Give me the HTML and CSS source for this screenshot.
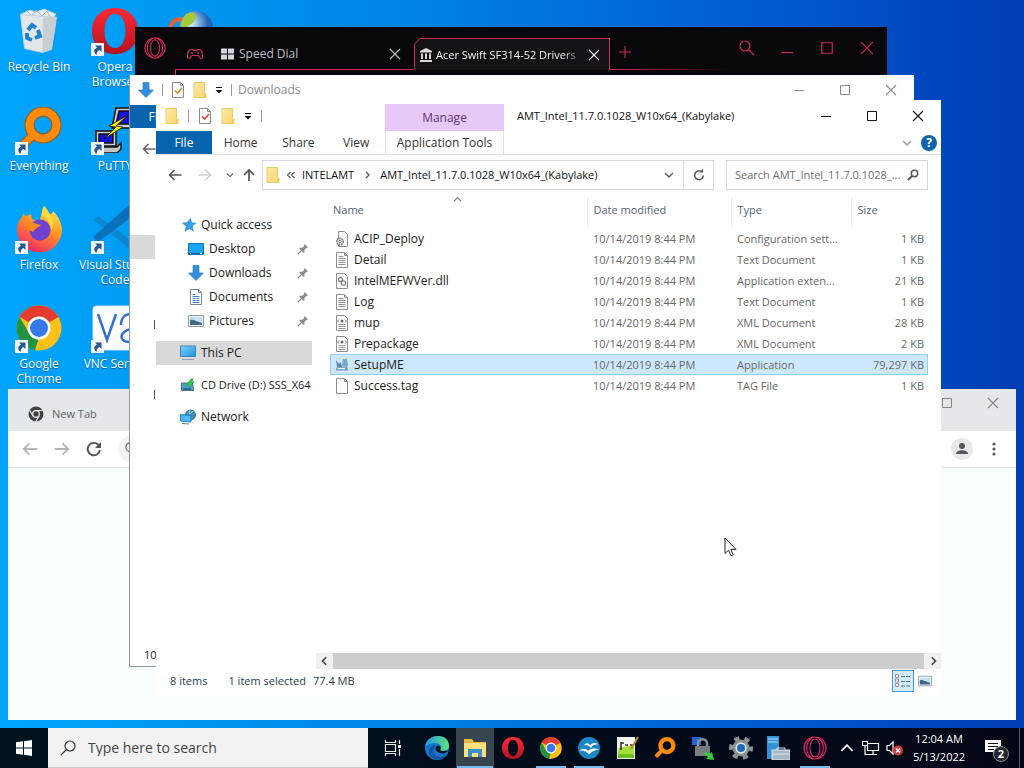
FILE: index.html
```html
<!DOCTYPE html>
<html lang="en">
<head>
<meta charset="utf-8">
<title>Desktop</title>
<link rel="stylesheet" href="styles.css">
</head>
<body>
<svg class="sprite" aria-hidden="true">
  <defs>
    <linearGradient id="g-folder" x1="0" y1="0" x2="1" y2="1"><stop offset="0" stop-color="#ffe9a0"/><stop offset="1" stop-color="#f8d775"/></linearGradient>
    <linearGradient id="g-opera" x1="0" y1="0" x2="0" y2="1"><stop offset="0" stop-color="#ff2a38"/><stop offset="1" stop-color="#b5101f"/></linearGradient>
    <linearGradient id="g-fox" x1="0.8" y1="0" x2="0.3" y2="1"><stop offset="0" stop-color="#fff04f"/><stop offset=".45" stop-color="#ff9423"/><stop offset="1" stop-color="#f4246c"/></linearGradient>
    <linearGradient id="g-edge" x1="0" y1="0" x2="1" y2="0"><stop offset="0" stop-color="#1f9be8"/><stop offset="1" stop-color="#5fe07a"/></linearGradient>
    <linearGradient id="g-screen" x1="0" y1="0" x2="1" y2="1"><stop offset="0" stop-color="#7cd3fb"/><stop offset="1" stop-color="#1c93e0"/></linearGradient>
    <radialGradient id="g-globe" cx=".35" cy=".35"><stop offset="0" stop-color="#e4f4ff"/><stop offset="1" stop-color="#1f65b8"/></radialGradient>
  </defs>
  <symbol id="i-min" viewBox="0 0 12 12"><path d="M1 6.500h10" stroke="currentColor" fill="none"/></symbol>
  <symbol id="i-max" viewBox="0 0 12 12"><path d="M1.500 1.500h9v9h-9z" stroke="currentColor" fill="none"/></symbol>
  <symbol id="i-close" viewBox="0 0 12 12"><path d="M1 1l10 10M11 1L1 11" stroke="currentColor" fill="none" stroke-width="1.100"/></symbol>
  <symbol id="i-plus" viewBox="0 0 12 12"><path d="M6 0v12M0 6h12" stroke="currentColor" fill="none" stroke-width="1.100"/></symbol>
  <symbol id="i-down" viewBox="0 0 10 10"><path d="M1 3l4 4 4-4" stroke="currentColor" fill="none" stroke-width="1.300"/></symbol>
  <symbol id="i-left" viewBox="0 0 14 14"><path d="M13.500 7H1.500M6.500 2L1.500 7l5 5" stroke="currentColor" fill="none" stroke-width="1.600"/></symbol>
  <symbol id="i-right" viewBox="0 0 14 14"><path d="M.5 7h12M7.500 2l5 5-5 5" stroke="currentColor" fill="none" stroke-width="1.600"/></symbol>
  <symbol id="i-up" viewBox="0 0 14 14"><path d="M7 13V2M2 7l5-5 5 5" stroke="currentColor" fill="none" stroke-width="1.700"/></symbol>
  <symbol id="i-crumb" viewBox="0 0 8 8"><path d="M3 1l3 3-3 3" stroke="currentColor" fill="none" stroke-width="1.300"/></symbol>
  <symbol id="i-dcrumb" viewBox="0 0 10 8"><path d="M4.500 1l-3 3 3 3M8.500 1l-3 3 3 3" stroke="currentColor" fill="none" stroke-width="1.100"/></symbol>
  <symbol id="i-reload" viewBox="0 0 16 16"><path d="M13 8.500A5 5 0 1 1 11 4.300" stroke="currentColor" fill="none" stroke-width="1.700"/><path d="M8.500 5h4V.8z" fill="currentColor"/></symbol>
  <symbol id="i-creload" viewBox="0 0 16 16"><path d="M14 9A6.200 6.200 0 1 1 12.500 4" stroke="currentColor" fill="none" stroke-width="1.900"/><path d="M9 7h6V1z" fill="currentColor"/></symbol>
  <symbol id="i-search" viewBox="0 0 16 16"><circle cx="10" cy="6" r="5" fill="none" stroke="currentColor" stroke-width="1.200"/><path d="M6.500 9.500L.8 15.200" stroke="currentColor" stroke-width="1.200"/></symbol>
  <symbol id="i-find" viewBox="0 0 12 12"><circle cx="7.500" cy="4.500" r="3.200" fill="none" stroke="currentColor" stroke-width="1.500"/><path d="M5 7L1 11" stroke="currentColor" stroke-width="2"/></symbol>
  <symbol id="i-folder" viewBox="0 0 14 16"><path d="M1 .5h10.500v10l1.500 1v4H1z" fill="url(#g-folder)" stroke="#eec968"/><path d="M11 12l2-1v4h-2z" fill="#f0c95d"/></symbol>
  <symbol id="i-check" viewBox="0 0 14 16"><path d="M1.500.5h8l3 3v12h-11z" fill="#fafafa" stroke="#8b8b8b"/><path d="M9.500.5v3h3" fill="none" stroke="#8b8b8b"/><path d="M4 8.500l2.500 2.500L11 6" stroke="currentColor" fill="none" stroke-width="1.600"/></symbol>
  <symbol id="i-menu" viewBox="0 0 8 8"><path d="M1 1.500h6" stroke="#111"/><path d="M.5 4h7L4 7.500z" fill="#111"/></symbol>
  <symbol id="i-dl" viewBox="0 0 16 16"><path d="M5 .5h6V8h4.500L8 15.500.5 8H5z" fill="#338fdb" stroke="#2274bb" stroke-width=".6"/></symbol>
  <symbol id="i-star" viewBox="0 0 14 14"><path d="M8.500.5l1 4.300 4.300.4L10.200 8l1.200 5L7.600 10.400 3 13.200 4.400 8.400.5 5l4.700-.3z" fill="#369fe8" stroke="#1f7fc6" stroke-width=".6"/></symbol>
  <symbol id="i-desk" viewBox="0 0 16 14"><path d="M.5 1.500h15v11H.5z" fill="#1aa5fb" stroke="#1273bd"/><path d="M1 11.500h14" stroke="#0c62a8"/><path d="M2 11.500h1M12 11.500h2" stroke="#cfeaff"/></symbol>
  <symbol id="i-doc" viewBox="0 0 14 16"><path d="M1.500.5h8l3 3v12h-11z" fill="#fff" stroke="#7d8790"/><path d="M9.500.5v3h3" fill="none" stroke="#7d8790"/><path d="M3.500 5.500h3M3.500 7.500h7M3.500 9.500h3m1 0h3M3.500 11.500h3m1 0h3M3.500 13.500h7" stroke="#2d86c4"/></symbol>
  <symbol id="i-pic" viewBox="0 0 16 12"><path d="M.5.5h15v11H.5z" fill="#fff" stroke="#8b99a6"/><path d="M2 2h12v8H2z" fill="#c4e0f5"/><path d="M2 5c3-1 5 1 12 3v2H2z" fill="#44698b"/></symbol>
  <symbol id="i-pc" viewBox="0 0 16 15"><path d="M.5.5h15v10.500H.5z" fill="url(#g-screen)" stroke="#3e87b5"/><path d="M2 14h12" stroke="#8ba4b5"/></symbol>
  <symbol id="i-cd" viewBox="0 0 16 14"><path d="M1.500 5h11l1 7.500h-12z" fill="#4f9fc4" stroke="#49707f"/><path d="M3 10h8v2H3z" fill="#266a8f"/><path d="M7 6L11 .8l2 .2-1 2.500 2 .5-5 5-1-2z" fill="#30c850" stroke="#198c35" stroke-width=".5"/></symbol>
  <symbol id="i-net" viewBox="0 0 16 16"><circle cx="10.500" cy="6" r="5" fill="#3f91ba" stroke="#2f6c91"/><path d="M10 1c-1 1.500-1 3-.5 4M13 2l-3 3" stroke="#9cd6e8" fill="none"/><path d="M.5 5.500l10.500 1v6.500l-10.500-1z" fill="#4db8f5" stroke="#287fb7"/><path d="M2 14.500l7 .5" stroke="#587f98"/></symbol>
  <symbol id="i-pin" viewBox="0 0 12 12"><path d="M7.500 1l3.500 3.500-1 .6-.6-.2-2 2 .1 2.300-.8.800L2.200 5.500l.8-.8 2.300.1 2-2-.2-.8z" fill="#878c91"/><path d="M4.500 7.500L1 11" stroke="#878c91" stroke-width="1.200"/></symbol>
  <symbol id="f-page" viewBox="0 0 14 16"><path d="M1.500.5h8l3 3v12h-11z" fill="#fdfdfd" stroke="#8e8e8e"/><path d="M9.500.5v3h3" fill="none" stroke="#8e8e8e"/></symbol>
  <symbol id="f-text" viewBox="0 0 14 16"><path d="M1.500.5h8l3 3v12h-11z" fill="#fdfdfd" stroke="#8e8e8e"/><path d="M9.500.5v3h3" fill="none" stroke="#8e8e8e"/><path d="M3.500 4.500h5M3.500 6.500h7M3.500 8.500h7M3.500 10.500h7M3.500 12.500h7" stroke="#909090"/></symbol>
  <symbol id="f-ini" viewBox="0 0 14 16"><path d="M3.500.5h6l3 3v12h-9z" fill="#fdfdfd" stroke="#8e8e8e"/><circle cx="5" cy="10.500" r="3.300" fill="#eee" stroke="#777" stroke-width="1.600" stroke-dasharray="1.700 .7"/><circle cx="5" cy="10.500" r="1.300" fill="#fff" stroke="#777"/></symbol>
  <symbol id="f-dll" viewBox="0 0 14 16"><path d="M1.500.5h8l3 3v12h-11z" fill="#fdfdfd" stroke="#8e8e8e"/><circle cx="5.500" cy="6.500" r="2" fill="none" stroke="#858585" stroke-width="1.300"/><circle cx="8.500" cy="10" r="2.200" fill="none" stroke="#858585" stroke-width="1.300"/></symbol>
  <symbol id="f-xml" viewBox="0 0 14 16"><path d="M1.500.5h8l3 3v12h-11z" fill="#fdfdfd" stroke="#8e8e8e"/><path d="M4 4.500L2.500 6 4 7.500M10 4.500L11.500 6 10 7.500" stroke="#777" fill="none"/><circle cx="7" cy="6" r="1.500" fill="#666"/><path d="M3.500 9.500h7M3.500 11.500h7M3.500 13.500h7" stroke="#999"/></symbol>
  <symbol id="f-app" viewBox="0 0 14 14"><path d="M2 9l10-1 1.500 4.500H.5z" fill="#7fa6bd"/><path d="M8 1h4l1 7H7z" fill="#75a8c8"/><path d="M1 2l3 4 2-2 1 5H2z" fill="#5a8aa9"/><path d="M3 10.500h7" stroke="#e6f5ff"/></symbol>
  <symbol id="i-shortcut" viewBox="0 0 13 13"><path d="M0 0h13v13H0z" fill="#f5f8fb"/><path d="M4 2.500h6.500V9L8.500 7C6 8 6 9.500 5.500 12 2 9 3 6 6 4.500z" fill="#26588f"/></symbol>
  <symbol id="b-opera" viewBox="0 0 46 46"><path fill-rule="evenodd" d="M23 0C9 0 0 10 0 23s9 23 23 23 23-10 23-23S37 0 23 0zm0 6c7 0 10.500 8 10.500 17S30 40 23 40 12.500 32 12.500 23 16 6 23 6z" fill="url(#g-opera)"/></symbol>
  <symbol id="b-gx" viewBox="0 0 24 24"><g fill="none" stroke="currentColor" stroke-width="1.200"><circle cx="12" cy="12" r="11"/><ellipse cx="12" cy="12" rx="5" ry="9"/><path d="M9 2c-7 4-7 16 0 20M15 2c7 4 7 16 0 20"/></g></symbol>
  <symbol id="b-chrome" viewBox="0 0 46 46"><circle cx="23" cy="23" r="22.500" fill="#fbc116"/><path d="M23 23L3.500 11.700A22.500 22.500 0 0 1 42.500 12z" fill="#e33b2e"/><path d="M3.500 11.700L13.300 28.600 23 33l-3.500 12.300A22.500 22.500 0 0 1 3.500 11.700z" fill="#229342"/><path d="M32.700 28.600L23 45.500l-4-.4L23 33z" fill="#fbc116"/><circle cx="23" cy="23" r="11.500" fill="#fff"/><circle cx="23" cy="23" r="9" fill="#3478ea"/></symbol>
  <symbol id="b-glass" viewBox="0 0 46 46"><circle cx="27" cy="18" r="13.500" fill="none" stroke="#9a5714" stroke-width="10"/><path d="M17 28L4 41" stroke="#9a5714" stroke-width="9"/><circle cx="27" cy="18" r="13.500" fill="none" stroke="#ff8a0c" stroke-width="8"/><path d="M18 27L4 41" stroke="#ff8a0c" stroke-width="7"/></symbol>
  <symbol id="b-bin" viewBox="0 0 46 46"><path d="M5 6l9-4 6 2 8-3 12 5-3 5H7z" fill="#e9eef2" stroke="#b9c6cf"/><path d="M11 3l5 5 4-6 6 6 5-5 3 6" fill="none" stroke="#a8b6c0"/><path d="M4.500 6.500l36 3-5 32-9 3-18-4z" fill="#e3e7ea" stroke="#c5d0d8"/><path d="M27 9.500l13.500-1-5 33-9 3z" fill="#c8ced2"/><g fill="none" stroke="#1f82cf" stroke-width="4"><path d="M12 22l4-5 4 3"/><path d="M22 22l2 6-5 2"/><path d="M16 32l-5-2v-5"/></g></symbol>
  <symbol id="b-putty" viewBox="0 0 46 46"><g stroke="#111" stroke-width="1.500"><path d="M24 1h22v20H20z" fill="#d2d0d0"/><path d="M27 4h17v13H24z" fill="#1512d8"/><path d="M4 24h20v15H4z" fill="#d2d0d0"/><path d="M7 27h14v9H7z" fill="#1512d8"/><path d="M2 40h23l4-4v6l-4 4H2z" fill="#c5c5c5"/><path d="M36 8L17 19l7 1-12 12 19-12-7-1z" fill="#fff200" stroke-width=".8"/></g></symbol>
  <symbol id="b-fox" viewBox="0 0 46 46"><path d="M28 0c3 4 5 6 5 9 3-1 4-3 4-4 5 5 9 12 9 19a22.500 22.500 0 0 1-45 0C1 18 3 14 6 11l1-3 3 2 5-2 1 5 7 3z" fill="url(#g-fox)"/><circle cx="24" cy="24" r="10.500" fill="#7040cf"/><path d="M12 18c5-3 8 0 13 1-3 3-6 3-8 7l-6-3z" fill="#ff8a1c"/><path d="M28 0c-3 6-3 9 1 12s7 8 6 13c5-7 1-16-7-25z" fill="#ffdb3d"/></symbol>
  <symbol id="b-code" viewBox="0 0 46 46"><path d="M1 14l5-4 40 30v6h-4z" fill="#0b86d0"/><path d="M36 0L1 31l5 5L46 6V0z" fill="#0a70ba"/></symbol>
  <symbol id="b-vnc" viewBox="0 0 46 46"><rect x="1" y="1" width="60" height="44" rx="3" fill="#fff" stroke="#cfe2f5"/><path d="M6 9l9 26L24 9M29 20c0-14 16-14 18-4M47 24c-20-2-22 13-10 13 4 0 7-1 10-4" fill="none" stroke="#356fd0" stroke-width="2.500"/></symbol>
  <symbol id="b-web" viewBox="0 0 46 46"><circle cx="28" cy="20" r="17" fill="url(#g-globe)"/><path d="M18 6c7-4 12 0 9 6s-10 5-12 12c-5-6 0-14 3-18z" fill="#a6c93a"/><path d="M2 24c0-10 5-13 12-13" stroke="#e6622c" stroke-width="4" fill="none"/></symbol>
  <symbol id="b-edge" viewBox="0 0 24 24"><circle cx="12" cy="12" r="12" fill="#1478ca"/><path d="M0 11C2-3 24-4 24 10c0 5-7 6-9 4 3-4-1-7-4-7-5 0-10 2-11 4z" fill="url(#g-edge)"/><path d="M9 12c-3 5 3 12 12 7-5 7-15 5-17-1-1-5 2-9 7-9-1 1-2 2-2 3z" fill="#1054a3"/><path d="M12 10c-3 2-1 6 3 7 3 1 6 0 8-2-1-1-6 1-8-1 2-2 0-5-3-4z" fill="#08101a"/></symbol>
  <symbol id="b-files" viewBox="0 0 24 22"><path d="M1 2h8l2 3h12v15H1z" fill="#eeb840"/><path d="M1 6h22v14H1z" fill="#ffdf7e"/><path d="M5 20v-8h14v8h-4v-4H9v4z" fill="#3a8fd1"/></symbol>
  <symbol id="b-office" viewBox="0 0 24 24"><circle cx="12" cy="12" r="12" fill="#1b87c6"/><path d="M6 9c4-4 6-2 7 0 3-3 6-3 9-1-4 0-6 1-8 4-2-3-4-4-8-3zM1 15c4-3 7-3 10 0 4-3 7-3 12-1-5 0-8 2-11 5-3-3-6-5-11-4z" fill="#fff"/></symbol>
  <symbol id="b-note" viewBox="0 0 24 24"><path d="M2 1h18v22H2z" fill="#f3f5ef"/><path d="M3 12l16-3v13H3z" fill="#a5dc3c"/><path d="M3 18h16v4H3z" fill="#6cc026"/><path d="M6 6v8M6 7h3M10 9h3M15 9h3" stroke="#333" stroke-width="1.600"/><path d="M23 1l-7 12" stroke="#c78342" stroke-width="2"/></symbol>
  <symbol id="b-lock" viewBox="0 0 24 24"><path d="M1 1h9v8H1z" fill="#2464d8"/><path d="M7 12V7c0-5 9-5 9 0v5" fill="none" stroke="#8b8f92" stroke-width="2.500"/><path d="M4 10h15v10H4z" fill="#777d82"/><path d="M14 15l4 3 3-2 2 8-8-1 2-2-4-3z" fill="#32cc3a"/></symbol>
  <symbol id="b-gear" viewBox="0 0 24 24"><circle cx="12" cy="12" r="8.500" fill="#8d9297"/><circle cx="12" cy="12" r="10" fill="none" stroke="#8d9297" stroke-width="4" stroke-dasharray="5.200 5.270" stroke-dashoffset="2"/><circle cx="12" cy="12" r="5.500" fill="#e4ecf2"/><circle cx="12" cy="12" r="4" fill="#1e68b5"/></symbol>
  <symbol id="b-server" viewBox="0 0 24 24"><path d="M1 0h12v23H1z" fill="#3292d8"/><path d="M2 3h10M2 6h10" stroke="#b5e1fb"/><path d="M6 14h18v10H6z" fill="#a7b8c4" stroke="#e0e7ed"/><path d="M11 14v-2h8v2M6 18h18" fill="none" stroke="#dce5eb"/></symbol>
  <symbol id="i-win" viewBox="0 0 16 16"><path d="M0 2.300L7 1.300v6.200H0zM8 1.200L16 0v7.500H8zM0 8.500h7v6.200l-7-1zM8 8.500h8V16l-8-1.200z" fill="#fff"/></symbol>
  <symbol id="i-task" viewBox="0 0 18 16"><path d="M1.500 4.500h10v7h-10zM1.500 0v2.500h10V0M1.500 16v-2.500h10V16M15.500 0v4M15.500 9v7" fill="none" stroke="#eee" stroke-width="1.200"/><path d="M14 5h3v3h-3z" fill="#eee"/></symbol>
  <symbol id="i-lan" viewBox="0 0 18 16"><path d="M5.500 3.500h11v7h-11zM11 10.500v4M8 14.500h7M.5 1.500h5v4h-5zM3 5.500v9h5" fill="none" stroke="#fff" stroke-width="1.200"/></symbol>
  <symbol id="i-vol" viewBox="0 0 18 16"><path d="M1 5.500h2.500L7 2v12l-3.500-3.500H1z" fill="none" stroke="#fff" stroke-width="1.200"/><circle cx="12" cy="10.500" r="5" fill="#d63b3b"/><path d="M10 8.500l4 4m0-4l-4 4" stroke="#fff" stroke-width="1.400"/></symbol>
  <symbol id="i-chat" viewBox="0 0 18 18"><path d="M1 1h16v12h-5l-3 4v-4H1z" fill="#fff"/><path d="M4 4.500h10M4 7.500h10M4 10.500h6" stroke="#07101a"/></symbol>
  <symbol id="i-pad" viewBox="0 0 16 12"><path d="M4 1.500h1.500l1 1h3l1-1H12c2.500 0 3.500 4 3.500 7 0 2.500-2 2.500-3 1l-1.500-2h-6l-1.500 2c-1 1.500-3 1.500-3-1 0-3 1-7 3.500-7z" fill="none" stroke="currentColor" stroke-width="1.200"/><circle cx="5" cy="5" r="1" fill="currentColor"/><circle cx="11" cy="5" r="1" fill="currentColor"/></symbol>
  <symbol id="i-tiles" viewBox="0 0 13 11"><path d="M0 0h6v5H0zM7 0h6v5H7zM0 6h6v5H0zM7 6h6v5H7z" fill="#d5d5da"/></symbol>
  <symbol id="i-bank" viewBox="0 0 12 14"><path d="M6 0l6 3v1.500H0V3zM1 5.500h2V11H1zM5 5.500h2V11H5zM9 5.500h2V11H9zM0 12h12v2H0z" fill="#d8d8dc"/></symbol>
  <symbol id="i-cmono" viewBox="0 0 16 16"><circle cx="8" cy="8" r="7.500" fill="#3f4347"/><circle cx="8" cy="8" r="3.300" fill="#3f4347" stroke="#e6e8ea" stroke-width="1.300"/><path d="M8 4.500h7M5 10L1.500 4M11 10l-3.500 6" stroke="#e6e8ea" stroke-width="1.200"/></symbol>
  <symbol id="i-user" viewBox="0 0 22 22"><circle cx="11" cy="11" r="11" fill="#e6e8eb"/><circle cx="11" cy="8" r="3" fill="#53585d"/><path d="M5 16c0-5 12-5 12 0z" fill="#53585d"/></symbol>
  <symbol id="i-dots" viewBox="0 0 4 14"><g fill="#53585d"><circle cx="2" cy="2" r="1.600"/><circle cx="2" cy="7" r="1.600"/><circle cx="2" cy="12" r="1.600"/></g></symbol>
  <symbol id="i-list" viewBox="0 0 18 14"><path d="M1.500.5h3v3h-3zM1.500 5h3v3h-3zM1.500 9.500h3v3h-3z" fill="#fff" stroke="#a08b9b"/><path d="M7 2.500h4m1 0h4M7 7.500h4m1 0h4M7 12h4m1 0h4" stroke="#52707f"/></symbol>
  <symbol id="i-corner" viewBox="0 0 8 32"><path d="M0 31.500C3 31.500 2.500 30 2.500 27V6L8 .5V32H0z" fill="#141118"/><path d="M0 31.500C3 31.500 2.500 30 2.500 27V6L8 .5" fill="none" stroke="#d22b57"/></symbol>
</svg>

<main class="desktop">
  <section class="shortcuts" aria-label="Desktop icons">
    <a class="shortcut" href="#"><svg class="big"><use href="#b-bin"/></svg><span>Recycle Bin</span></a>
    <a class="shortcut linked" href="#"><svg class="big"><use href="#b-glass"/></svg><svg class="arrow"><use href="#i-shortcut"/></svg><span>Everything</span></a>
    <a class="shortcut linked" href="#"><svg class="big"><use href="#b-fox"/></svg><svg class="arrow"><use href="#i-shortcut"/></svg><span>Firefox</span></a>
    <a class="shortcut linked" href="#"><svg class="big"><use href="#b-chrome"/></svg><svg class="arrow"><use href="#i-shortcut"/></svg><span>Google Chrome</span></a>
    <a class="shortcut linked" href="#"><svg class="big"><use href="#b-opera"/></svg><svg class="arrow"><use href="#i-shortcut"/></svg><span>Opera Browser</span></a>
    <a class="shortcut linked" href="#"><svg class="big"><use href="#b-putty"/></svg><svg class="arrow"><use href="#i-shortcut"/></svg><span>PuTTY</span></a>
    <a class="shortcut linked" href="#"><svg class="big"><use href="#b-code"/></svg><svg class="arrow"><use href="#i-shortcut"/></svg><span>Visual Studio Code</span></a>
    <a class="shortcut linked" href="#"><svg class="big"><use href="#b-vnc"/></svg><svg class="arrow"><use href="#i-shortcut"/></svg><span>VNC Server</span></a>
    <a class="shortcut" href="#" aria-label="Web"><svg class="big"><use href="#b-web"/></svg></a>
  </section>

  <section class="window chrome" aria-label="Chrome">
    <div class="chrome-tabs">
      <svg class="s16"><use href="#i-cmono"/></svg><span class="grow">New Tab</span>
      <button class="cap" aria-label="Maximize"><svg class="s12"><use href="#i-max"/></svg></button>
      <button class="cap" aria-label="Close"><svg class="s12"><use href="#i-close"/></svg></button>
    </div>
    <div class="chrome-bar">
      <button class="cbtn dim" aria-label="Back"><svg class="s16"><use href="#i-left"/></svg></button>
      <button class="cbtn dim" aria-label="Forward"><svg class="s16"><use href="#i-right"/></svg></button>
      <button class="cbtn" aria-label="Reload"><svg class="s16"><use href="#i-creload"/></svg></button>
      <span class="omni"><svg class="s14 flip"><use href="#i-search"/></svg></span>
      <button class="cbtn" aria-label="Profile"><svg class="s22"><use href="#i-user"/></svg></button>
      <button class="cbtn" aria-label="Menu"><svg class="dots"><use href="#i-dots"/></svg></button>
    </div>
  </section>

  <section class="window opera" aria-label="Opera GX">
    <button class="o-logo" aria-label="Opera menu"><svg class="s22"><use href="#b-gx"/></svg></button>
    <div class="o-strip">
      <button class="o-pad" aria-label="GX corner"><svg class="s16"><use href="#i-pad"/></svg></button>
      <div class="o-tab"><svg class="s12w"><use href="#i-tiles"/></svg><span class="grow">Speed Dial</span><svg class="s12"><use href="#i-close"/></svg></div>
      <div class="o-tab on"><svg class="corner"><use href="#i-corner"/></svg><div class="o-body"><svg class="bank"><use href="#i-bank"/></svg><span class="grow fade">Acer Swift SF314-52 Drivers</span><svg class="s12"><use href="#i-close"/></svg></div></div>
      <div class="o-rest"><button aria-label="New tab"><svg class="s12"><use href="#i-plus"/></svg></button></div>
    </div>
    <div class="o-caps">
      <button aria-label="Search"><svg class="s16 flip"><use href="#i-search"/></svg></button>
      <button aria-label="Minimize"><svg class="s14 low"><use href="#i-min"/></svg></button>
      <button aria-label="Maximize"><svg class="s14"><use href="#i-max"/></svg></button>
      <button aria-label="Close"><svg class="s14"><use href="#i-close"/></svg></button>
    </div>
  </section>

  <section class="window downloads" aria-label="Downloads">
    <div class="d-title">
      <svg class="s16"><use href="#i-dl"/></svg><i class="bar"></i>
      <svg class="file gold"><use href="#i-check"/></svg><svg class="file"><use href="#i-folder"/></svg>
      <svg class="s8"><use href="#i-menu"/></svg><i class="bar"></i><span class="grow">Downloads</span>
      <button class="cap" aria-label="Minimize"><svg class="s12"><use href="#i-min"/></svg></button>
      <button class="cap" aria-label="Maximize"><svg class="s12"><use href="#i-max"/></svg></button>
      <button class="cap" aria-label="Close"><svg class="s12"><use href="#i-close"/></svg></button>
    </div>
    <button class="d-file">File</button>
    <div class="d-back"><svg class="s14"><use href="#i-left"/></svg></div>
    <div class="d-pane"><i class="d-sel"></i><i class="d-mark"></i><i class="d-mark"></i></div>
    <div class="d-status">10 items</div>
  </section>

  <section class="window explorer" aria-label="AMT_Intel_11.7.0.1028_W10x64_(Kabylake)">
    <header class="head">
      <div class="quick">
        <svg class="file"><use href="#i-folder"/></svg><i class="bar"></i>
        <svg class="file red"><use href="#i-check"/></svg><svg class="file"><use href="#i-folder"/></svg>
        <svg class="s8"><use href="#i-menu"/></svg><i class="bar"></i>
      </div>
      <div class="manage">Manage</div>
      <div class="title"><span class="grow">AMT_Intel_11.7.0.1028_W10x64_(Kabylake)</span>
        <button class="cap" aria-label="Minimize"><svg class="s12"><use href="#i-min"/></svg></button>
        <button class="cap" aria-label="Maximize"><svg class="s12"><use href="#i-max"/></svg></button>
        <button class="cap" aria-label="Close"><svg class="s12"><use href="#i-close"/></svg></button>
      </div>
      <div class="tabs"><button class="on">File</button><button>Home</button><button>Share</button><button>View</button></div>
      <button class="tools">Application Tools</button>
      <div class="extra"><svg class="s10"><use href="#i-down"/></svg><button class="help" aria-label="Help">?</button></div>
    </header>
    <div class="address">
      <button class="nv" aria-label="Back"><svg class="s14"><use href="#i-left"/></svg></button>
      <button class="nv off" aria-label="Forward"><svg class="s14"><use href="#i-right"/></svg></button>
      <button class="nv slim" aria-label="Recent"><svg class="s8"><use href="#i-down"/></svg></button>
      <button class="nv slim" aria-label="Up"><svg class="s14"><use href="#i-up"/></svg></button>
      <div class="path">
        <svg class="file"><use href="#i-folder"/></svg><svg class="s10"><use href="#i-dcrumb"/></svg>
        <a href="#">INTELAMT</a><svg class="s8"><use href="#i-crumb"/></svg><a class="grow" href="#">AMT_Intel_11.7.0.1028_W10x64_(Kabylake)</a>
        <svg class="s10"><use href="#i-down"/></svg>
        <button class="reload" aria-label="Refresh"><svg class="s14"><use href="#i-reload"/></svg></button>
      </div>
      <label class="search"><input type="text" aria-label="Search" placeholder="Search AMT_Intel_11.7.0.1028_..."><svg class="s12"><use href="#i-find"/></svg></label>
    </div>
    <div class="main">
      <nav class="side">
        <a href="#"><svg class="s14"><use href="#i-star"/></svg><span>Quick access</span></a>
        <a class="sub" href="#"><svg class="s16"><use href="#i-desk"/></svg><span>Desktop</span><svg class="s12"><use href="#i-pin"/></svg></a>
        <a class="sub" href="#"><svg class="s16"><use href="#i-dl"/></svg><span>Downloads</span><svg class="s12"><use href="#i-pin"/></svg></a>
        <a class="sub" href="#"><svg class="s16"><use href="#i-doc"/></svg><span>Documents</span><svg class="s12"><use href="#i-pin"/></svg></a>
        <a class="sub" href="#"><svg class="s16"><use href="#i-pic"/></svg><span>Pictures</span><svg class="s12"><use href="#i-pin"/></svg></a>
        <a class="root sel" href="#"><svg class="s16"><use href="#i-pc"/></svg><span>This PC</span></a>
        <a class="root long" href="#"><svg class="s16"><use href="#i-cd"/></svg><span>CD Drive (D:) SSS_X64</span></a>
        <a class="root" href="#"><svg class="s16"><use href="#i-net"/></svg><span>Network</span></a>
      </nav>
      <div class="pane">
        <div class="list">
          <svg class="sort"><use href="#i-down"/></svg>
          <table>
            <colgroup><col><col class="c-date"><col class="c-type"><col class="c-size"></colgroup>
            <thead><tr><th>Name</th><th>Date modified</th><th>Type</th><th>Size</th></tr></thead>
            <tbody>
              <tr><td><svg class="file"><use href="#f-ini"/></svg>ACIP_Deploy</td><td>10/14/2019 8:44 PM</td><td>Configuration sett...</td><td>1 KB</td></tr>
              <tr><td><svg class="file"><use href="#f-text"/></svg>Detail</td><td>10/14/2019 8:44 PM</td><td>Text Document</td><td>1 KB</td></tr>
              <tr><td><svg class="file"><use href="#f-dll"/></svg>IntelMEFWVer.dll</td><td>10/14/2019 8:44 PM</td><td>Application exten...</td><td>21 KB</td></tr>
              <tr><td><svg class="file"><use href="#f-text"/></svg>Log</td><td>10/14/2019 8:44 PM</td><td>Text Document</td><td>1 KB</td></tr>
              <tr><td><svg class="file"><use href="#f-xml"/></svg>mup</td><td>10/14/2019 8:44 PM</td><td>XML Document</td><td>28 KB</td></tr>
              <tr><td><svg class="file"><use href="#f-xml"/></svg>Prepackage</td><td>10/14/2019 8:44 PM</td><td>XML Document</td><td>2 KB</td></tr>
              <tr class="sel"><td><svg class="file"><use href="#f-app"/></svg>SetupME</td><td>10/14/2019 8:44 PM</td><td>Application</td><td>79,297 KB</td></tr>
              <tr><td><svg class="file"><use href="#f-page"/></svg>Success.tag</td><td>10/14/2019 8:44 PM</td><td>TAG File</td><td>1 KB</td></tr>
            </tbody>
          </table>
        </div>
        <div class="scroll"><button aria-label="Scroll left"><svg class="s10 mirror"><use href="#i-crumb"/></svg></button><span class="thumb"></span><button aria-label="Scroll right"><svg class="s10"><use href="#i-crumb"/></svg></button></div>
      </div>
    </div>
    <footer class="status">
      <span>8 items</span><span>1 item selected</span><span class="grow">77.4 MB</span>
      <button class="view on" aria-label="Details"><svg class="s18"><use href="#i-list"/></svg></button>
      <button class="view" aria-label="Large icons"><svg class="s14"><use href="#i-pic"/></svg></button>
    </footer>
  </section>

  <svg class="cursor" viewBox="0 0 13 20" aria-hidden="true"><path d="M1 1v15.500l3.500-3.300 2.500 5.600 2.300-1-2.500-5.400H12z" fill="#fff" stroke="#222"/></svg>
</main>

<footer class="taskbar">
  <button class="start" aria-label="Start"><svg class="s16"><use href="#i-win"/></svg></button>
  <label class="find"><svg class="s16"><use href="#i-search"/></svg><input type="text" aria-label="Type here to search" placeholder="Type here to search"></label>
  <button class="tview" aria-label="Task View"><svg class="s18"><use href="#i-task"/></svg></button>
  <button class="app" aria-label="Edge"><svg class="s24"><use href="#b-edge"/></svg></button>
  <button class="app run on" aria-label="File Explorer"><svg class="s24"><use href="#b-files"/></svg></button>
  <button class="app" aria-label="Opera"><svg class="s22"><use href="#b-opera"/></svg></button>
  <button class="app run" aria-label="Chrome"><svg class="s22"><use href="#b-chrome"/></svg></button>
  <button class="app run" aria-label="OpenOffice"><svg class="s22"><use href="#b-office"/></svg></button>
  <button class="app" aria-label="Notepad++"><svg class="s24"><use href="#b-note"/></svg></button>
  <button class="app" aria-label="Everything"><svg class="s22"><use href="#b-glass"/></svg></button>
  <button class="app" aria-label="WinSCP"><svg class="s24"><use href="#b-lock"/></svg></button>
  <button class="app slim" aria-label="Settings"><svg class="s24"><use href="#b-gear"/></svg></button>
  <button class="app slim" aria-label="Server Manager"><svg class="s24"><use href="#b-server"/></svg></button>
  <button class="app slim run" aria-label="Opera GX"><svg class="s24 gx"><use href="#b-gx"/></svg></button>
  <div class="tray">
    <button aria-label="Show hidden icons"><svg class="s14 turn"><use href="#i-down"/></svg></button>
    <button aria-label="Network"><svg class="s18"><use href="#i-lan"/></svg></button>
    <button aria-label="Volume"><svg class="s18"><use href="#i-vol"/></svg></button>
    <time>12:04 AM<br>5/13/2022</time>
    <button class="notes" aria-label="Notifications"><svg class="chat"><use href="#i-chat"/></svg><b>2</b></button>
    <i class="peek"></i>
  </div>
</footer>
</body>
</html>
```
FILE: styles.css
```css
* { box-sizing: border-box; }
body {
  margin: 0;
  height: 100vh;
  display: flex;
  flex-direction: column;
  overflow: hidden;
  font: 12px/16px "Open Sans", "Noto Sans", sans-serif;
  color: #1b1b1b;
}
button, input { font: inherit; color: inherit; background: none; border: 0; padding: 0; margin: 0; }
button { display: flex; align-items: center; justify-content: center; }
input { min-width: 0; outline: 0; text-overflow: ellipsis; }
a { color: inherit; text-decoration: none; }
svg { display: block; flex: none; }
.sprite { position: absolute; width: 0; height: 0; }
.s8 { width: 8px; height: 8px; }
.s10 { width: 10px; height: 10px; }
.s12 { width: 12px; height: 12px; }
.s12w { width: 13px; height: 12px; }
.s14 { width: 14px; height: 14px; }
.s16 { width: 16px; height: 16px; }
.s18 { width: 18px; height: 16px; }
.s22 { width: 22px; height: 22px; }
.s24 { width: 24px; height: 24px; }
.file { width: 14px; height: 16px; }
.grow { flex: 1; min-width: 0; white-space: nowrap; overflow: hidden; }
.bar { width: 1px; height: 12px; background: #999; }

.desktop {
  position: relative;
  flex: 1;
  min-height: 0;
  overflow: hidden;
  background: linear-gradient(90deg, #00a5fb 0%, #009cf4 13%, #0083e4 40%, #0060d4 70%, #0048c0 90%, #003cb2 100%);
}
.window { position: absolute; overflow: hidden; }

.shortcuts {
  display: grid;
  grid-auto-flow: column;
  grid-template-rows: repeat(4, 99px);
  grid-auto-columns: 76px;
  padding: 8px 0 0 1px;
}
.shortcut {
  position: relative;
  display: flex;
  flex-direction: column;
  align-items: center;
  gap: 5px;
  color: #fff;
  text-align: center;
  line-height: 15px;
  text-shadow: 0 1px 1px #0059a0;
}
.big { width: 46px; height: 46px; }
.arrow { position: absolute; left: 14px; top: 35px; width: 13px; height: 13px; }

.chrome { left: 8px; right: 8px; top: 389px; bottom: 8px; background: #f9feff; }
.chrome-tabs { display: flex; align-items: center; gap: 8px; height: 42px; padding: 8px 0 0 20px; background: #e4e7eb; color: #5f6368; font-size: 11px; }
.chrome-tabs .cap { height: 28px; margin: -22px 0 0 -8px; color: #888; }
.chrome-bar { display: flex; align-items: center; height: 37px; padding: 0 6px; background: #fff; border-bottom: 1px solid #dcdfe2; }
.cbtn { width: 32px; height: 30px; color: #505458; }
.cbtn.dim { color: #b3b6b9; }
.omni { flex: 1; display: flex; align-items: center; height: 26px; margin: 0 8px; padding-left: 7px; border-radius: 13px; background: #f1f3f4; color: #505458; }
.dots { width: 4px; height: 14px; }
.cap { width: 46px; height: 30px; }

.opera { left: 135px; right: 137px; top: 27px; height: 60px; display: flex; background: #08070b; color: #d22b57; }
.o-logo { width: 40px; height: 42px; }
.o-strip { flex: 1; display: flex; align-items: flex-end; height: 43px; }
.o-pad { width: 38px; height: 32px; border-bottom: 1px solid #d22b57; }
.o-strip::before { content: ""; align-self: flex-end; width: 1px; height: 6px; margin: 0 0 -5px; background: #d22b57; }
.o-tab { flex: none; display: flex; align-items: center; gap: 5px; width: 198px; height: 32px; padding: 0 11px 0 7px; border-bottom: 1px solid #d22b57; color: #bdbdc4; }
.o-tab.on { gap: 0; padding: 0; border: 0; color: #f2f2f4; font-size: 11px; }
.corner { width: 8px; height: 32px; }
.o-body { flex: 1; min-width: 0; height: 32px; display: flex; align-items: center; gap: 4px; padding: 0 9px 0 0; background: #141118; border: solid #d22b57; border-width: 1px 1px 0 0; }
.bank { width: 12px; height: 14px; }
.fade { -webkit-mask-image: linear-gradient(90deg, #000 85%, transparent); mask-image: linear-gradient(90deg, #000 85%, transparent); }
.o-rest { flex: 1; height: 32px; padding-left: 9px; border-bottom: 1px solid; border-image: linear-gradient(90deg, #d22b57, transparent) 1; }
.o-rest button { height: 28px; }
.o-caps { display: flex; height: 42px; }
.o-caps button { width: 40px; }
.flip { transform: scaleX(-1); }
.low { margin-top: 8px; }

.downloads { left: 129px; right: 110px; top: 75px; bottom: 61px; display: flex; flex-direction: column; align-items: flex-start; background: #fff; border: 1px solid #8d979e; border-width: 0 0 1px 1px; }
.d-title { display: flex; align-items: center; gap: 8px; align-self: stretch; height: 30px; padding-left: 8px; color: #8c8c8c; }
.d-title .cap { margin-left: -8px; }
.d-title .grow { margin-left: -2px; }
.gold { color: #c8932a; }
.red { color: #d9433a; }
.d-file { width: 56px; height: 23px; background: #0a64ad; color: #fff; }
.d-back { padding: 14px 12px; color: #666; }
.d-pane { flex: 1; width: 25px; padding-top: 65px; }
.d-pane i { display: block; }
.d-sel { width: 25px; height: 24px; background: #d9d9d9; }
.d-mark { width: 1px; height: 9px; margin: 61px 0 0 24px; background: #555; }
.d-status { padding: 3px 14px; font-size: 11px; }

.explorer { left: 156px; right: 83px; top: 100px; bottom: 33px; display: flex; flex-direction: column; background: #fff; }
.head { display: grid; grid-template-columns: 229px 119px 1fr; grid-template-rows: 31px 23px; border-bottom: 1px solid #e2e2e2; }
.quick { display: flex; align-items: center; gap: 9px; padding-left: 9px; }
.manage { margin-top: 4px; line-height: 28px; text-align: center; background: #e6c9f8; color: #5a3a6e; }
.title { display: flex; align-items: center; padding-left: 13px; color: #111; font-size: 11px; }
.tabs { display: flex; color: #333; }
.tabs button { width: 58px; }
.tabs .on { width: 56px; background: #0a64ad; color: #fff; }
.tools { border: solid #e2e2e2; border-width: 0 1px; color: #333; }
.extra { display: flex; align-items: center; justify-content: flex-end; gap: 9px; padding-right: 4px; color: #999; }
.help { width: 16px; height: 16px; border-radius: 50%; background: #0c63ae; color: #fff; font-weight: 700; }

.address { display: flex; padding: 5px 13px 0 4px; color: #333; font-size: 11px; }
.nv { width: 30px; height: 30px; color: #555; }
.nv.off { color: #d0d0d0; }
.nv.slim { width: 19px; }
.path { flex: 1; min-width: 0; display: flex; align-items: center; gap: 6px; height: 30px; margin: 0 12px 0 4px; padding-left: 3px; border: 1px solid #d9d9d9; color: #555; }
.path a { color: #111; padding-right: 3px; }
.path .grow { padding-left: 3px; }
.reload { width: 30px; height: 28px; margin-left: 3px; border-left: 1px solid #d9d9d9; }
.search { width: 202px; height: 30px; display: flex; align-items: center; gap: 4px; padding: 0 8px; border: 1px solid #d9d9d9; color: #555; }
.search input { flex: 1; }
.search input::placeholder { color: #707070; opacity: 1; }

.main { flex: 1; min-height: 0; display: flex; }
.side { width: 156px; padding-top: 23px; }
.side a { display: flex; align-items: center; gap: 5px; height: 24px; padding-left: 26px; white-space: nowrap; }
.side span { flex: 1; min-width: 0; overflow: hidden; }
.side .sub { padding: 0 3px 0 32px; }
.side .root { margin-top: 8px; padding-left: 24px; }
.side .long { font-size: 11px; }
.side .sel { background: #d9d9d9; }
.pane { flex: 1; min-width: 0; display: flex; flex-direction: column; padding-left: 4px; }
.list { position: relative; flex: 1; padding: 7px 13px 0 14px; }
.sort { position: absolute; left: 137px; top: 5px; width: 9px; height: 9px; transform: rotate(180deg); color: #777; }
table { width: 100%; table-layout: fixed; border-collapse: collapse; color: #686868; font-size: 11px; }
.c-date { width: 144px; }
.c-type { width: 120px; }
.c-size { width: 77px; }
th, td { height: 21px; padding: 0 6px; text-align: left; font-weight: 400; white-space: nowrap; }
th { height: 31px; padding-bottom: 5px; color: #56627a; }
th + th { border-left: 1px solid #ebebeb; }
th:first-child { padding-left: 3px; }
td:first-child { display: flex; align-items: center; gap: 5px; padding-left: 5px; color: #1b1b1b; font-size: 12px; }
td:last-child { padding-right: 4px; text-align: right; }
tr.sel { background: #cce8ff; outline: 1px solid #99cdf0; outline-offset: -1px; }
.scroll { display: flex; height: 16px; background: #f0f0f0; color: #444; }
.scroll button { width: 17px; }
.thumb { flex: 1; background: #cdcdcd; }
.mirror { transform: scaleX(-1); }
.status { display: flex; align-items: flex-start; height: 26px; padding: 0 5px 0 14px; line-height: 24px; color: #2b3b4e; font-size: 11px; }
.status span { white-space: nowrap; }
.status span + span { margin-left: 21px; }
.status .grow + .view { margin-left: 0; }
.status span.grow { margin-left: 7px; }
.view { width: 22px; height: 22px; margin-top: 1px; }
.view.on { background: #d3ecfa; border: 1px solid #3b9bd1; }

.cursor { position: absolute; left: 724px; top: 537px; width: 13px; height: 20px; }

.taskbar { display: flex; height: 40px; background: linear-gradient(90deg, #00131f, #020b19 60%, #030616); color: #fff; }
.start { width: 48px; }
.find { width: 320px; display: flex; align-items: center; gap: 12px; padding: 0 12px; background: #f2f2f2; color: #333; border-bottom: 1px solid #ccc; }
.find input { flex: 1; font-size: 14px; }
.find input::placeholder { color: #444; opacity: 1; }
.tview { width: 50px; }
.app { width: 38px; }
.app.slim { width: 37px; }
.app.run { background: linear-gradient(#76b9ed, #76b9ed) center bottom / 30px 2px no-repeat; }
.app.run.on { background: linear-gradient(#76b9ed, #76b9ed) center bottom / 36px 2px no-repeat, #38444e; }
.gx { color: #d92361; }
.tray { flex: 1; display: flex; align-items: center; justify-content: flex-end; }
.tray button { width: 24px; height: 40px; }
.turn { transform: rotate(180deg); }
.tray time { width: 64px; text-align: center; line-height: 18px; font-size: 11px; }
.tray .notes { position: relative; width: 48px; }
.chat { width: 18px; height: 18px; margin-right: 4px; }
.notes b { position: absolute; left: 22px; top: 18px; width: 16px; height: 16px; border-radius: 50%; border: 1px solid #888; background: #222b33; font-size: 11px; line-height: 14px; }
.peek { width: 1px; height: 40px; margin-right: 4px; background: #5a606a; }
```
